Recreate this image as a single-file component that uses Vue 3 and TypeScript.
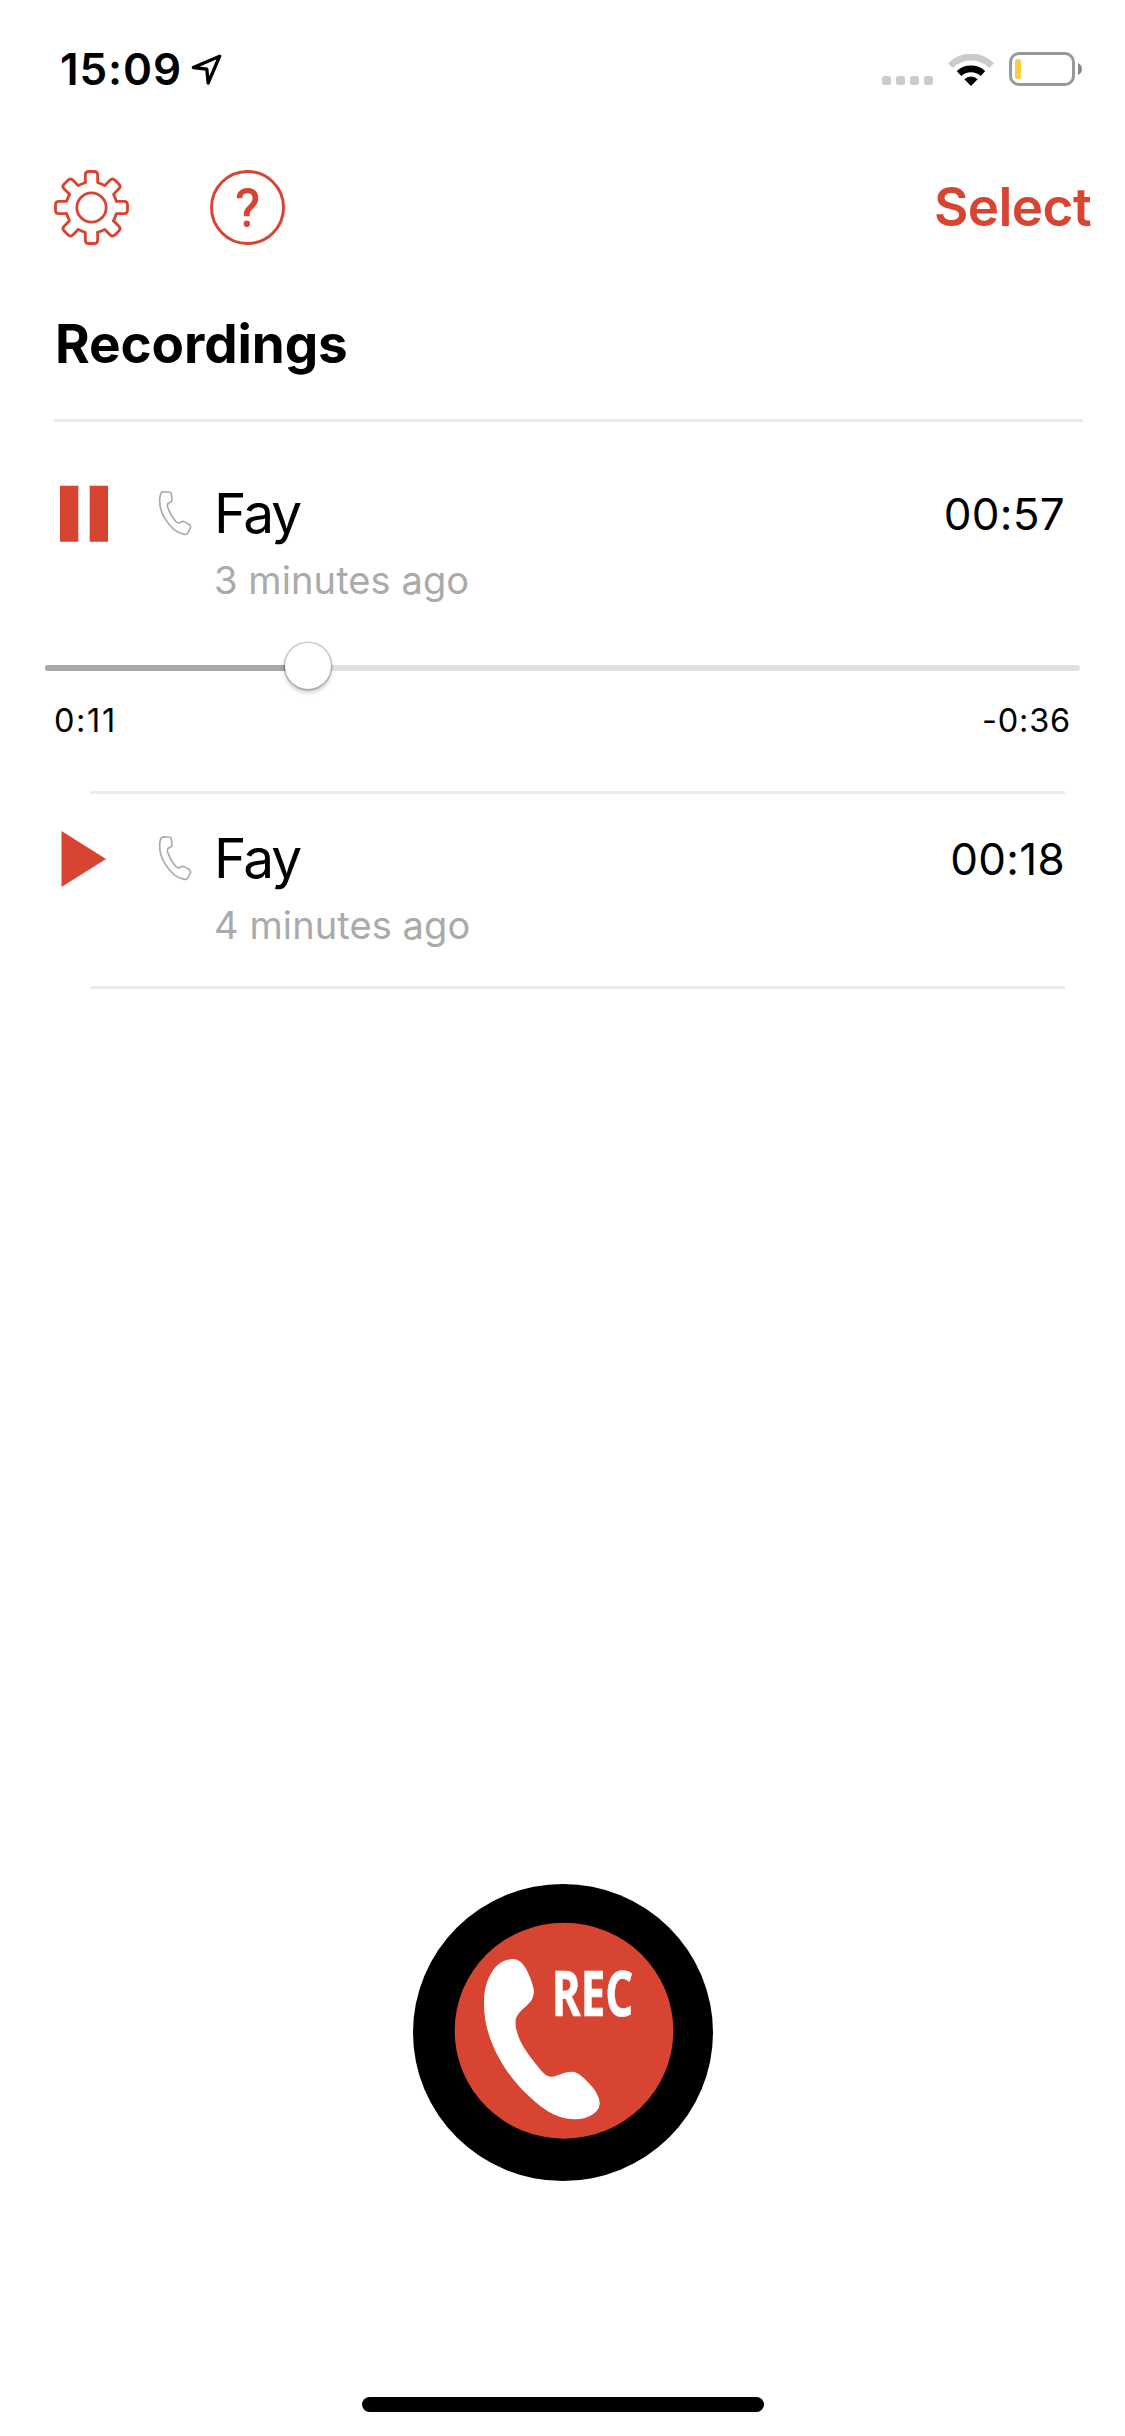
<script setup lang="ts">
interface Recording {
  id: number
  name: string
  age: string
  duration: string
  playing: boolean
  elapsed?: string
  remaining?: string
  progress?: number
}

const recordings: Recording[] = [
  { id: 1, name: 'Fay', age: '3 minutes ago', duration: '00:57', playing: true, elapsed: '0:11', remaining: '-0:36', progress: 25.4 },
  { id: 2, name: 'Fay', age: '4 minutes ago', duration: '00:18', playing: false },
]

const teeth = [0, 45, 90, 135, 180, 225, 270, 315]
</script>

<template>
  <div class="screen">
    <header class="status">
      <span class="clock">15:09</span>
      <svg class="location" viewBox="453 66 96 99">
        <path d="M460 109.500L539 75.500L504.500 156L500.500 114.500Z" />
      </svg>
      <div class="signal"><i v-for="n in 4" :key="n"></i></div>
      <svg class="wifi" viewBox="264 63 138 105">
        <path d="M271 104A88 88 0 0 1 395 104" fill="none" stroke="#cbcbcb" stroke-width="20" />
        <path d="M297 127.500A54 54 0 0 1 369 127.500" fill="none" stroke="#000" stroke-width="20" />
        <path d="M333 165L313 144.500A29 29 0 0 1 353 144.500Z" />
      </svg>
      <div class="battery"><i></i></div>
      <svg class="nub" viewBox="0 0 4 12"><path d="M0 0Q4 2 4 6T0 12Z" fill="#8a8a8a" /></svg>
    </header>

    <nav class="toolbar">
      <svg class="tool" viewBox="-112.500 -112.500 225 225">
        <g fill="none" stroke="#d84432" stroke-width="8.500" stroke-linecap="round" stroke-linejoin="round">
          <circle r="44" />
          <path v-for="t in teeth" :key="t" :transform="`rotate(${t})`" d="M-18.500 -75V-98Q-18.500 -108 -8 -108H8Q18.500 -108 18.500 -98V-75L40 -66" />
        </g>
      </svg>
      <div class="help">?</div>
      <span class="select">Select</span>
    </nav>

    <h1 class="title"><span>Recordings</span></h1>

    <main class="list">
      <section v-for="r in recordings" :key="r.id" class="item" :class="{ open: r.playing }">
        <div class="row">
          <svg class="control" viewBox="0 0 48 60">
            <path v-if="r.playing" d="M0 2.800H18.300V58.700H0ZM29.700 2.800H48V58.700H29.700Z" />
            <path v-else d="M1.500 3L46 31L1.500 59Z" />
          </svg>
          <svg class="handset" viewBox="354 90 102 138">
            <path d="M370 95.500L387 96Q393 96 394 102L396 120Q396 124 392 126L386 129Q380 133 383 142Q390 164 406 183Q412 190 419 188Q427 182 433 185L449 195Q453 199 451 204L444 218Q441 224 433 223C413 220 391 203 375 176C361 153 356 128 361 105Q363 96 370 95.500Z" />
          </svg>
          <div class="who">
            <span class="name">{{ r.name }}</span>
            <span class="age">{{ r.age }}</span>
          </div>
          <span class="duration">{{ r.duration }}</span>
        </div>
        <div v-if="r.playing" class="player">
          <div class="track">
            <div class="played" :style="{ width: r.progress + '%' }"></div>
            <div class="thumb"></div>
          </div>
          <div class="times"><span class="elapsed">{{ r.elapsed }}</span><span>{{ r.remaining }}</span></div>
        </div>
      </section>
    </main>

    <footer class="footer">
      <svg class="record" viewBox="0 0 900 891">
        <ellipse cx="450" cy="445.500" rx="450" ry="445.500" />
        <ellipse cx="453" cy="440" rx="328" ry="324" fill="#d84432" />
        <path fill="#fff" d="M299 225C317 225 331 239 341 258C350 277 359 298 362 316C364 329 360 346 349 357C337 370 320 381 311 398C305 410 308 431 313 447C322 478 345 512 371 543C389 565 398 578 415 578C436 577 451 562 478 563C499 565 516 585 532 602C548 619 564 645 559 665C555 684 529 705 488 706C444 707 402 685 368 655C323 616 288 577 258 522C230 470 212 417 213 354C213 309 226 276 247 250C261 233 281 225 299 225Z" />
        <text x="416" y="397" textLength="245" lengthAdjust="spacingAndGlyphs">REC</text>
      </svg>
      <div class="home"></div>
    </footer>
  </div>
</template>

<style>
body {
  background: #fff;
}
</style>

<style scoped>
.screen {
  width: 1125px;
  height: 2436px;
  display: flex;
  flex-direction: column;
  overflow: hidden;
  background: #fff;
  color: #000;
  font-family: Inter, "Liberation Sans", sans-serif;
  white-space: nowrap;
}
.status {
  height: 138px;
  box-sizing: border-box;
  padding-left: 60px;
  padding-right: 43px;
  display: flex;
  align-items: center;
}
.clock {
  width: 131px;
  font-size: 44px;
  font-weight: 600;
  line-height: 60px;
  letter-spacing: 0.9px;
}
.location {
  width: 32px;
  height: 33px;
}
.location path {
  fill: none;
  stroke: #000;
  stroke-width: 10;
  stroke-linejoin: round;
}
.signal {
  margin-left: auto;
  margin-top: 23px;
  display: flex;
  gap: 5px;
}
.signal i {
  width: 9px;
  height: 9px;
  border-radius: 2.5px;
  background: #cbcbcb;
}
.wifi {
  width: 46px;
  height: 35px;
  margin-left: 15px;
}
.battery {
  width: 66px;
  height: 34px;
  box-sizing: border-box;
  margin-left: 15px;
  padding: 4px 3px;
  border: 3px solid #999;
  border-radius: 10px;
}
.battery i {
  display: block;
  width: 6px;
  height: 20px;
  border-radius: 2px;
  background: #f7ce46;
}
.nub {
  width: 4px;
  height: 12px;
  margin-left: 3px;
}
.toolbar {
  height: 139px;
  box-sizing: border-box;
  padding: 0 34px 0 54px;
  display: flex;
  align-items: center;
}
.tool {
  width: 75px;
  height: 75px;
}
.help {
  width: 75px;
  height: 75px;
  box-sizing: border-box;
  margin-left: 81px;
  border: 3px solid #d84432;
  border-radius: 50%;
  color: #d84432;
  font: 400 52px/72px Roboto, sans-serif;
  -webkit-text-stroke: 1px #d84432;
  text-align: center;
}
.select {
  margin-left: auto;
  padding-bottom: 1px;
  color: #d84432;
  font-size: 53px;
  font-weight: 600;
  letter-spacing: -0.6px;
}
.title {
  margin: 0 42px 0 54px;
  padding: 0 0 8px 1px;
  border-bottom: 3px solid #ebebeb;
  font-size: 53px;
  font-weight: 700;
  line-height: 134px;
  letter-spacing: -0.1px;
}
.item {
  padding-top: 34px;
}
.item.open {
  padding-top: 61px;
}
.item::after {
  content: "";
  display: block;
  height: 3px;
  margin: 38px 60px 0 90px;
  background: #ebebeb;
}
.row {
  height: 120px;
  padding: 0 60px;
  display: flex;
  align-items: flex-start;
}
.control {
  width: 48px;
  height: 60px;
}
.control path {
  fill: #d84432;
}
.handset {
  width: 34px;
  height: 46px;
  margin: 7px 0 0 50px;
}
.handset path {
  fill: none;
  stroke: #aaa;
  stroke-width: 5;
}
.who {
  margin-left: 22px;
  display: flex;
  flex-direction: column;
  gap: 15px;
}
.name {
  font-size: 55px;
  line-height: 60px;
  letter-spacing: -2px;
}
.age {
  color: #aaa;
  font-size: 38px;
  line-height: 44px;
  letter-spacing: 0.1px;
}
.duration {
  margin-left: auto;
  font-size: 44px;
  line-height: 62px;
  letter-spacing: 0.3px;
}
.player {
  height: 150px;
  padding: 62px 45px 0;
  box-sizing: border-box;
}
.track {
  height: 6px;
  display: flex;
  align-items: center;
  border-radius: 3px;
  background: #e1e1e1;
}
.played {
  height: 6px;
  border-radius: 3px;
  background: #a9a9a9;
}
.thumb {
  flex: none;
  width: 46px;
  height: 46px;
  margin: -4px 0 0 -23px;
  border-radius: 50%;
  background: #fff;
  box-shadow: 0 0 0 1.5px rgba(0, 0, 0, 0.18), 0 3px 5px rgba(0, 0, 0, 0.25);
}
.times {
  padding: 28px 9px 0;
  display: flex;
  justify-content: space-between;
  font-size: 32.5px;
  line-height: 44px;
  letter-spacing: 0.8px;
}
.elapsed {
  letter-spacing: 1.6px;
}
.footer {
  margin-top: auto;
  padding-bottom: 24px;
  display: flex;
  flex-direction: column;
  align-items: center;
}
.record {
  width: 300px;
  height: 297px;
  margin-left: 1px;
}
.record text {
  fill: #fff;
  stroke: #fff;
  stroke-width: 2;
  font: 700 190px "Open Sans", sans-serif;
}
.home {
  width: 402px;
  height: 15px;
  margin-top: 216px;
  border-radius: 7.5px;
  background: #000;
}
</style>
